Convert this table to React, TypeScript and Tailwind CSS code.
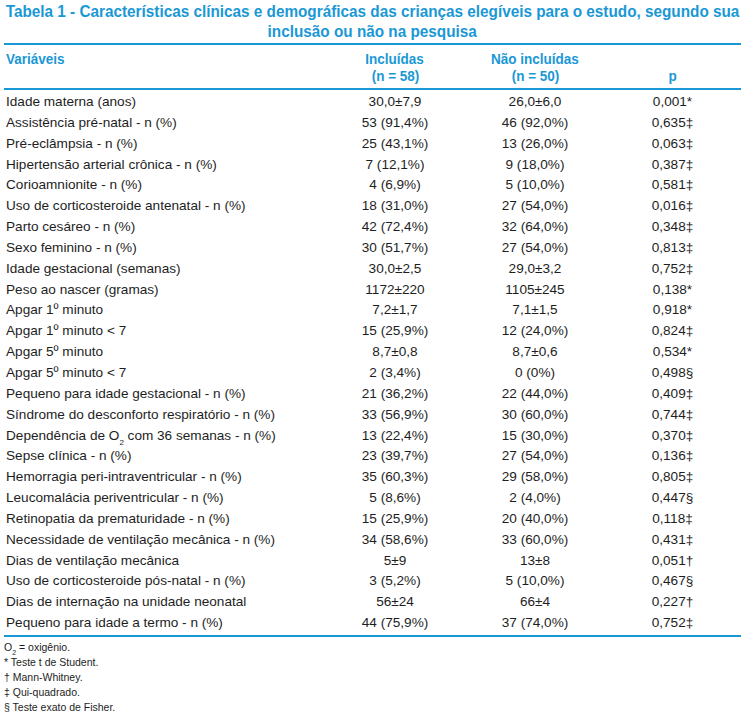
const rows: [React.ReactNode, string, string, string][] = [
  ["Idade materna (anos)", "30,0±7,9", "26,0±6,0", "0,001*"],
  ["Assistência pré-natal - n (%)", "53 (91,4%)", "46 (92,0%)", "0,635‡"],
  ["Pré-eclâmpsia - n (%)", "25 (43,1%)", "13 (26,0%)", "0,063‡"],
  ["Hipertensão arterial crônica - n (%)", "7 (12,1%)", "9 (18,0%)", "0,387‡"],
  ["Corioamnionite - n (%)", "4 (6,9%)", "5 (10,0%)", "0,581‡"],
  ["Uso de corticosteroide antenatal - n (%)", "18 (31,0%)", "27 (54,0%)", "0,016‡"],
  ["Parto cesáreo - n (%)", "42 (72,4%)", "32 (64,0%)", "0,348‡"],
  ["Sexo feminino - n (%)", "30 (51,7%)", "27 (54,0%)", "0,813‡"],
  ["Idade gestacional (semanas)", "30,0±2,5", "29,0±3,2", "0,752‡"],
  ["Peso ao nascer (gramas)", "1172±220", "1105±245", "0,138*"],
  ["Apgar 1º minuto", "7,2±1,7", "7,1±1,5", "0,918*"],
  ["Apgar 1º minuto < 7", "15 (25,9%)", "12 (24,0%)", "0,824‡"],
  ["Apgar 5º minuto", "8,7±0,8", "8,7±0,6", "0,534*"],
  ["Apgar 5º minuto < 7", "2 (3,4%)", "0 (0%)", "0,498§"],
  ["Pequeno para idade gestacional - n (%)", "21 (36,2%)", "22 (44,0%)", "0,409‡"],
  ["Síndrome do desconforto respiratório - n (%)", "33 (56,9%)", "30 (60,0%)", "0,744‡"],
  [
    <>
      Dependência de O<sub className="text-[8px] align-[-3px]">2</sub> com 36 semanas - n (%)
    </>,
    "13 (22,4%)",
    "15 (30,0%)",
    "0,370‡",
  ],
  ["Sepse clínica - n (%)", "23 (39,7%)", "27 (54,0%)", "0,136‡"],
  ["Hemorragia peri-intraventricular - n (%)", "35 (60,3%)", "29 (58,0%)", "0,805‡"],
  ["Leucomalácia periventricular - n (%)", "5 (8,6%)", "2 (4,0%)", "0,447§"],
  ["Retinopatia da prematuridade - n (%)", "15 (25,9%)", "20 (40,0%)", "0,118‡"],
  ["Necessidade de ventilação mecânica - n (%)", "34 (58,6%)", "33 (60,0%)", "0,431‡"],
  ["Dias de ventilação mecânica", "5±9", "13±8", "0,051†"],
  ["Uso de corticosteroide pós-natal - n (%)", "3 (5,2%)", "5 (10,0%)", "0,467§"],
  ["Dias de internação na unidade neonatal", "56±24", "66±4", "0,227†"],
  ["Pequeno para idade a termo - n (%)", "44 (75,9%)", "37 (74,0%)", "0,752‡"],
];

// narrow bold look of the source PDF (Arial Narrow is not installed)
function Narrow({ children }: { children: React.ReactNode }) {
  return (
    <span className="inline-block whitespace-nowrap font-bold scale-x-[0.9] origin-center">
      {children}
    </span>
  );
}

const cols = "grid grid-cols-[322px_138px_142px_1fr]";

export default function App() {
  return (
    <div className="w-[745px] h-[718px] bg-white font-['Liberation_Sans',Arial,sans-serif] text-[#1e1e1e] overflow-hidden">
      <h1 className="text-[#1a98d5] text-[17px] leading-[20px] pt-[2px]">
        <div className="flex justify-center">
          <span className="shrink-0">
            <Narrow>
              Tabela 1 - Características clínicas e demográficas das crianças elegíveis para o estudo, segundo sua
            </Narrow>
          </span>
        </div>
        <div className="flex justify-center">
          <Narrow>inclusão ou não na pesquisa</Narrow>
        </div>
      </h1>

      <div className="mx-[4px] mt-[1px] border-t-2 border-[#1a98d5]">
        <div
          className={`${cols} text-[#1a98d5] text-[15px] leading-[17px] pt-[5px] pb-[4px] border-b-2 border-[#1a98d5]`}
        >
          <div className="pl-[2px]">
            <span className="inline-block whitespace-nowrap font-bold scale-x-[0.9] origin-left">Variáveis</span>
          </div>
          <div className="text-center">
            <Narrow>Incluídas</Narrow>
            <br />
            <Narrow>(n = 58)</Narrow>
          </div>
          <div className="text-center">
            <Narrow>Não incluídas</Narrow>
            <br />
            <Narrow>(n = 50)</Narrow>
          </div>
          <div className="text-center self-end pr-[2px]">
            <Narrow>p</Narrow>
          </div>
        </div>

        <div className="pt-[2px] pb-[1px] border-b-2 border-[#1a98d5] text-[13.6px] leading-[20.85px]">
          {rows.map((r, i) => (
            <div key={i} className={cols}>
              <div className="pl-[2px] whitespace-nowrap">{r[0]}</div>
              <div className="text-center">{r[1]}</div>
              <div className="text-center">{r[2]}</div>
              <div className="text-center pr-[2px]">{r[3]}</div>
            </div>
          ))}
        </div>

        <div className="pt-[3px] text-[10.5px] leading-[15px]">
          <div>
            O<sub className="text-[7px] align-[-2px]">2</sub> = oxigênio.
          </div>
          <div>* Teste t de Student.</div>
          <div>† Mann-Whitney.</div>
          <div>‡ Qui-quadrado.</div>
          <div>§ Teste exato de Fisher.</div>
        </div>
      </div>
    </div>
  );
}
